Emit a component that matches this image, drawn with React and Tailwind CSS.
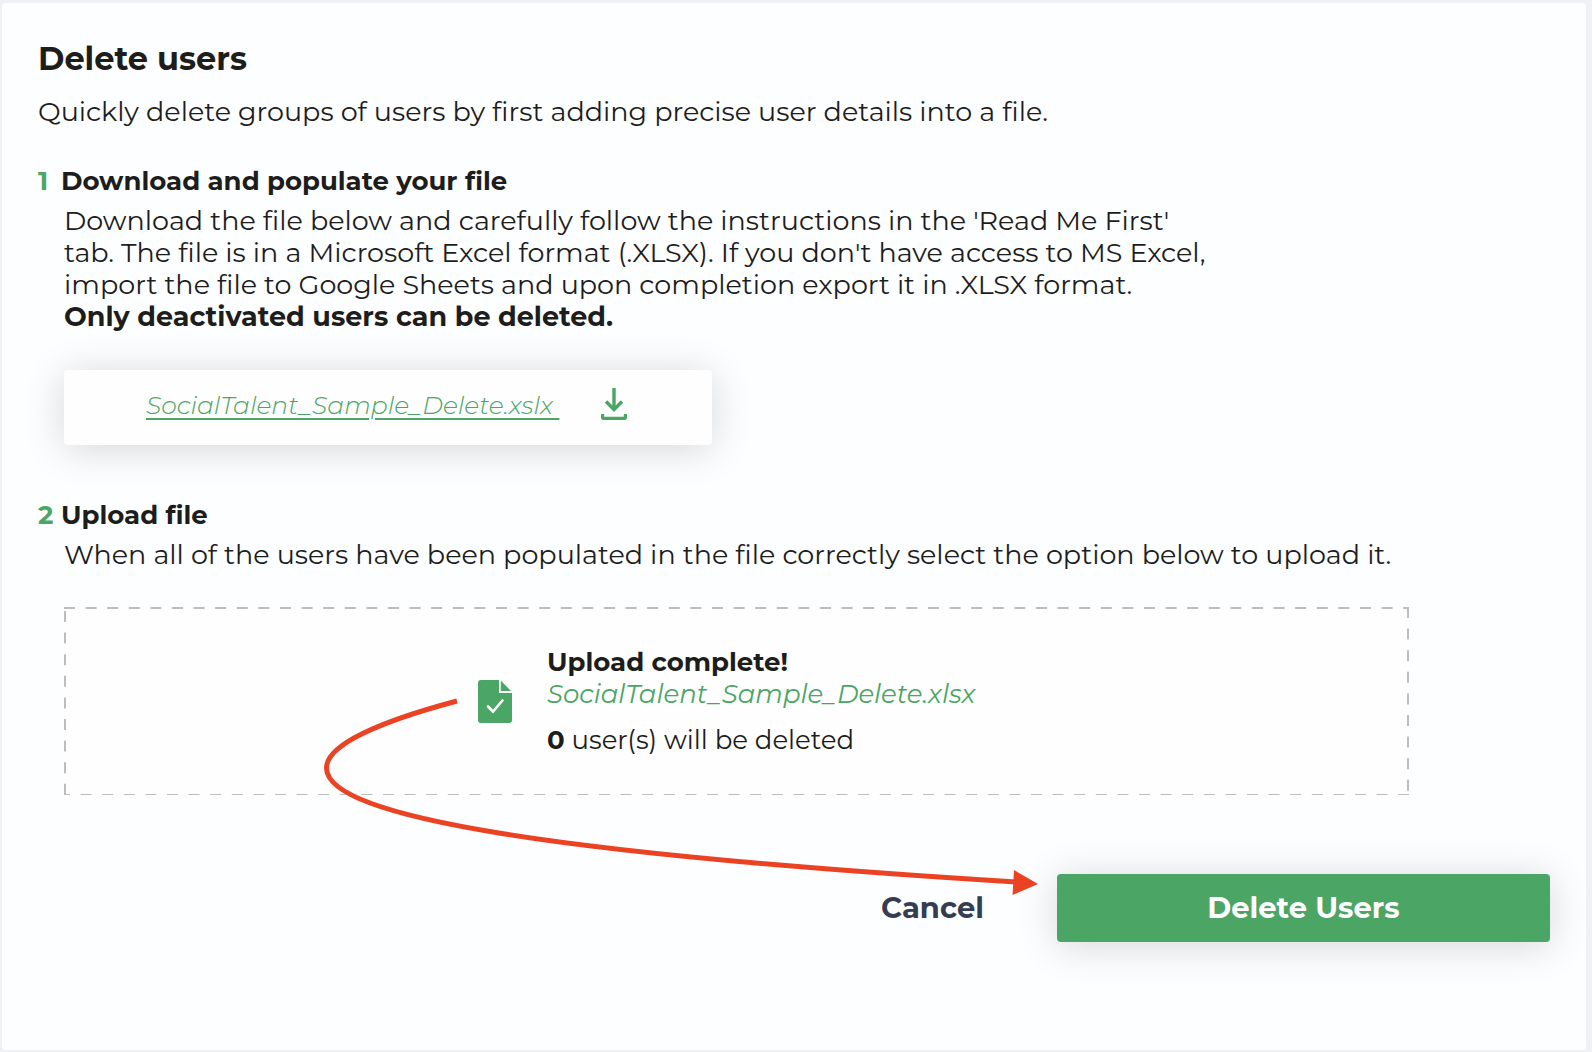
const ACCENT = "#4ba564";

function DownloadIcon() {
  return (
    <svg width="26" height="34" viewBox="0 0 26 34" fill="none" aria-hidden="true" stroke={ACCENT} strokeWidth="3.4">
      <path d="M13 0V20" />
      <path d="M5 13.5L13 21.5L21 13.5" />
      <path d="M1.5 26V28.8Q1.5 30.4 3.1 30.4H22.9Q24.5 30.4 24.5 28.8V26" />
    </svg>
  );
}

function FileCheckIcon() {
  return (
    <svg width="34" height="44" viewBox="0 -1 34 44" fill="none" aria-hidden="true">
      <path d="M3 0H21V13H34V40Q34 43 31 43H3Q0 43 0 40V3Q0 0 3 0Z" fill={ACCENT} />
      <path d="M22.8 0.6L33 11H22.8Z" fill={ACCENT} />
      <path d="M10 26.5L15 31.5L24.5 20.5" stroke="#fff" strokeWidth="2.6" strokeLinecap="round" />
    </svg>
  );
}

function DashedFrame() {
  return (
    <svg className="pointer-events-none absolute inset-0 h-full w-full" aria-hidden="true" stroke="#bdbdbd" strokeWidth="2" strokeDasharray="11 10.6">
      <line x1="0" y1="1" x2="100%" y2="1" />
      <line x1="0" y1="100%" x2="100%" y2="100%" strokeDashoffset="5" />
      <line x1="1" y1="4" x2="1" y2="100%" />
      <line x1="100%" y1="0" x2="100%" y2="100%" strokeWidth="4" />
    </svg>
  );
}

function StepHeading({ number, children }) {
  return (
    <h2 className="flex text-[26px] leading-8 font-bold">
      <span className="w-[23px] text-[#4ba564]">{number}</span>
      {children}
    </h2>
  );
}

function FlowArrow() {
  return (
    <svg className="pointer-events-none absolute top-[690px] left-[310px]" width="740" height="210" viewBox="310 690 740 210" fill="none" aria-hidden="true">
      <path d="M457 701C382 721 326.5 744 326.5 768C326.5 818 560 854 1016 882" stroke="#ec4224" strokeWidth="5" />
      <path d="M1014 870L1038 884L1012.500 895Z" fill="#ec4224" />
    </svg>
  );
}

export default function App() {
  return (
    <div className="relative min-h-screen bg-[#eff1f5] pt-[3px] pr-1.5 pb-0.5 pl-0.5 font-['Montserrat','Inter',sans-serif] text-[#1d1d1b]">
      <main className="min-h-[1047px] rounded-sm bg-[#fdfeff] pt-9 pr-9 pl-9">
        <h1 className="text-[32px] leading-10 font-bold">Delete users</h1>
        <p className="mt-[17px] text-[27px] leading-8">
          Quickly delete groups of users by first adding precise user details into a file.
        </p>

        <section className="mt-[37px]">
          <StepHeading number="1">Download and populate your file</StepHeading>
          <div className="mt-2 pl-[26px]">
            <p className="text-[27px] leading-8">
              Download the file below and carefully follow the instructions in the 'Read Me First'
              <br />
              tab. The file is in a Microsoft Excel format (.XLSX). If you don't have access to MS Excel,
              <br />
              import the file to Google Sheets and upon completion export it in .XLSX format.
              <br />
              <strong className="font-bold">Only deactivated users can be deleted.</strong>
            </p>
            <a
              href="#sample"
              className="mt-[37px] flex h-[75px] w-[648px] max-w-full items-center gap-[42px] rounded bg-[#fefefe] pb-1.5 pl-[82px] text-[25px] leading-8 font-light text-[#4ba564] italic shadow-[0_4px_40px_rgba(0,0,0,0.16)]"
            >
              <span className="whitespace-pre underline decoration-2 underline-offset-4">SocialTalent_Sample_Delete.xslx </span>
              <DownloadIcon />
            </a>
          </div>
        </section>

        <section className="mt-[54px]">
          <StepHeading number="2">Upload file</StepHeading>
          <div className="mt-2 pl-[26px]">
            <p className="text-[27px] leading-8">
              When all of the users have been populated in the file correctly select the option below to upload it.
            </p>
            <div className="relative mt-9 mr-[141px] flex h-[188px] items-center gap-[35px] bg-[#fefefe] pl-[414px]">
              <DashedFrame />
              <FileCheckIcon />
              <div className="text-[26px] leading-8">
                <p className="font-bold">Upload complete!</p>
                <p className="text-[#4ba564] italic">SocialTalent_Sample_Delete.xlsx</p>
                <p className="mt-3.5">
                  <strong className="font-bold">0</strong> user(s) will be deleted
                </p>
              </div>
            </div>
          </div>
        </section>

        <div className="mt-[79px] flex items-center justify-end gap-[73px] text-[29px] leading-9 font-bold">
          <button type="button" className="text-[#343d52]">Cancel</button>
          <button type="button" className="h-[68px] w-[493px] rounded bg-[#4ba564] text-white shadow-[0_4px_40px_rgba(0,0,0,0.16)]">
            Delete Users
          </button>
        </div>
      </main>
      <FlowArrow />
    </div>
  );
}
